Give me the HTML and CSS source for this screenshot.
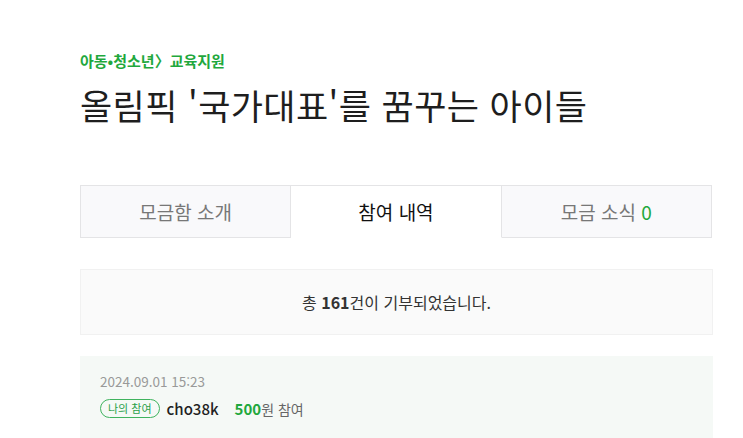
FILE: index.html
```html
<!DOCTYPE html>
<html lang="ko">
<head>
<meta charset="utf-8">
<link rel="stylesheet" href="styles.css">
</head>
<body>
<div class="page">
  <div class="category">아동•청소년〉교육지원</div>
  <h1 class="title">올림픽 '국가대표'를 꿈꾸는 아이들</h1>
  <div class="tabs">
    <div class="tab"><span>모금함 소개</span></div>
    <div class="tab active"><span>참여 내역</span></div>
    <div class="tab"><span>모금 소식 <span class="green">0</span></span></div>
  </div>
  <div class="summary"><span>총 <b>161</b>건이 기부되었습니다.</span></div>
  <div class="item">
    <div class="date">2024.09.01 15:23</div>
    <div class="row">
      <span class="badge">나의 참여</span>
      <span class="user">cho38k</span>
      <span class="amount"><span class="num">500</span>원 참여</span>
    </div>
  </div>
</div>
</body>
</html>
```
FILE: styles.css
```css
* { box-sizing: border-box; }
html, body { margin: 0; padding: 0; background: #fff; }
body { font-family: "Noto Sans CJK KR", "Noto Sans", sans-serif; color: #222; }
.page { width: 633px; margin-left: 80px; padding-top: 50px; }
.category { font-size: 15px; font-weight: 700; color: #1fa83d; letter-spacing: 0; line-height: 22px; }
.title { margin: 9px 0 0; font-size: 35px; font-weight: 400; line-height: 48px; letter-spacing: 0.4px; color: #1e1e1e; }
.tabs { display: flex; margin-top: 56px; height: 53px; width: 632px; }
.tab { flex: 1; display: flex; align-items: center; justify-content: center; font-size: 19px; color: #777; background: #f9f9fb; border: 1px solid #e4e4e6; }
.tab + .tab { border-left: none; }
.tab.active { background: #fff; color: #111; border-bottom-color: #fff; }
.green { color: #1fa83d; }
.summary { margin-top: 31px; height: 66px; background: #fafafa; border: 1px solid #f1f1f1; display: flex; align-items: center; justify-content: center; font-size: 16px; color: #333; }
.summary b { font-weight: 700; }
.item { margin-top: 21px; background: #f5f9f6; padding: 14px 20px 20px; height: 90px; }
.date { font-size: 13.5px; color: #999; line-height: 22px; }
.row { display: flex; align-items: center; margin-top: 6px; }
.badge { font-size: 11px; color: #2aa04a; border: 1px solid #3fb35e; border-radius: 10px; padding: 0 7px; line-height: 17px; margin-right: 7px; }
.user { font-size: 15px; color: #222; font-weight: 500; margin-right: 16px; }
.amount { font-size: 14px; color: #666; }
.num { font-size: 15px; color: #1fa83d; font-weight: 700; }
```
